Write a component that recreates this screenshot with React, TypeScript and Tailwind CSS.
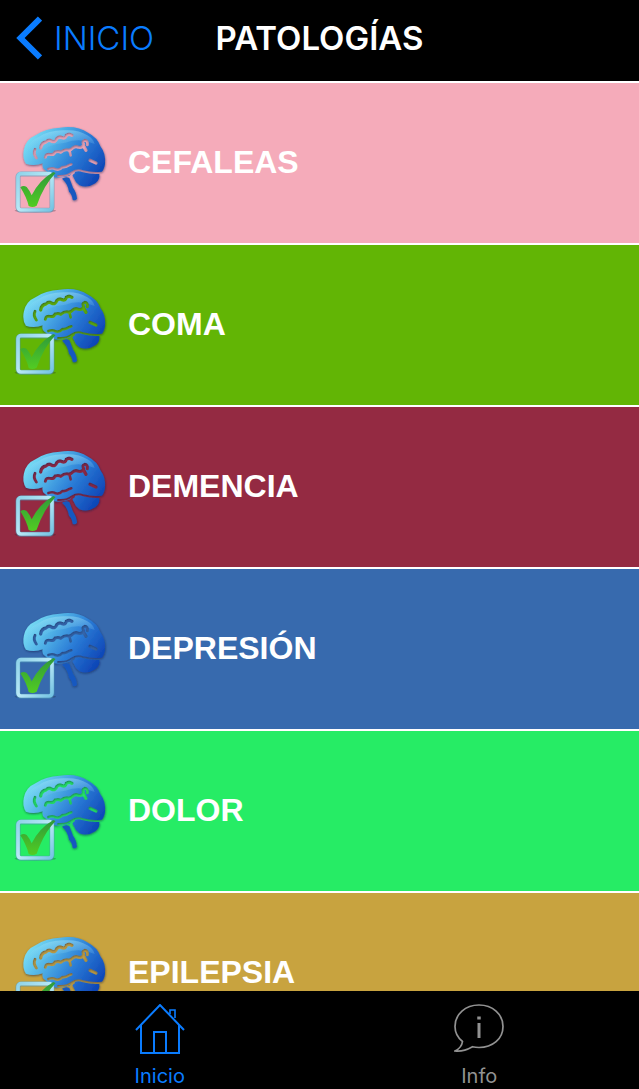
import React from 'react';

interface Pathology {
  name: string;
  color: string;
}

const pathologies: Pathology[] = [
  { name: 'CEFALEAS', color: 'bg-[#f5abba]' },
  { name: 'COMA', color: 'bg-[#62b505]' },
  { name: 'DEMENCIA', color: 'bg-[#942a42]' },
  { name: 'DEPRESIÓN', color: 'bg-[#376aae]' },
  { name: 'DOLOR', color: 'bg-[#26ec65]' },
  { name: 'EPILEPSIA', color: 'bg-[#c8a33f]' },
];

// Shared gradients and mask, rendered once for all the rows
const BrainDefs: React.FC = () => (
  <svg className="absolute h-0 w-0" aria-hidden="true">
    <defs>
      <linearGradient id="brain-fill" gradientUnits="userSpaceOnUse" x1="85" y1="75" x2="290" y2="215">
        <stop offset="0" stopColor="#79def5" />
        <stop offset="0.3" stopColor="#4fb0e6" />
        <stop offset="0.6" stopColor="#2a7bd6" />
        <stop offset="1" stopColor="#0c42b4" />
      </linearGradient>
      <linearGradient id="brain-shine" x1="0" y1="0" x2="0" y2="1">
        <stop offset="0" stopColor="#b5effc" stopOpacity="0.4" />
        <stop offset="1" stopColor="#5fbdf0" stopOpacity="0" />
      </linearGradient>
      <linearGradient id="box-stroke" x1="0" y1="0" x2="1" y2="1">
        <stop offset="0" stopColor="#8fd3ea" />
        <stop offset="0.5" stopColor="#b9e9f6" />
        <stop offset="1" stopColor="#74c3e3" />
      </linearGradient>
      <linearGradient id="check-fill" x1="0" y1="0" x2="0" y2="1">
        <stop offset="0" stopColor="#2f9a3a" />
        <stop offset="1" stopColor="#52cc22" />
      </linearGradient>
      <filter id="brain-shadow" x="-10%" y="-10%" width="120%" height="125%">
        <feDropShadow dx="1" dy="3" stdDeviation="3" floodColor="#0a2350" floodOpacity="0.6" />
      </filter>
      <mask id="brain-folds" maskUnits="userSpaceOnUse" x="36" y="-18" width="300" height="342">
        <rect x="36" y="-18" width="300" height="342" fill="#fff" />
        <g fill="none" stroke="#000" strokeWidth="8" strokeLinecap="round" strokeLinejoin="round">
          <path d="M105 112Q99 124 109 138" strokeWidth="9" />
          <path d="M122 108Q124 92 138 90Q146 81 156 88Q166 92 170 80Q178 72 186 77Q196 81 199 70Q207 63 216 70" strokeWidth="10" />
          <path d="M136 136Q138 124 150 127Q162 130 165 120Q176 116 182 121Q192 112 201 113Q211 117 218 108Q226 101 236 106Q248 108 251 97Q245 88 254 85Q264 86 262 98" strokeWidth="9" />
          <path d="M208 114L212 130" />
          <path d="M250 101L258 115" strokeWidth="10" />
          <path d="M145 171Q158 166 167 172Q179 176 187 165Q198 167 206 160L214 157" />
          <path d="M270 145L288 153" strokeWidth="10" />
          <path d="M174 192Q200 194 216 181Q232 170 250 178Q278 186 306 182" strokeWidth="6" />
          <path d="M222 182Q208 190 214 204" strokeWidth="6" />
        </g>
      </mask>
    </defs>
  </svg>
);

const BrainIcon: React.FC = () => (
  <svg viewBox="36 -18 300 342" className="h-[114px] w-[100px] shrink-0" aria-hidden="true">
    <g filter="url(#brain-shadow)">
      <g mask="url(#brain-folds)">
        <path
          d="M78 155Q66 138 72 112Q78 82 108 69Q136 49 180 47Q232 40 264 62Q292 76 302 104Q318 124 315 156Q312 178 298 186Q300 204 286 214Q262 230 238 220Q226 212 222 199L216 188Q190 199 164 196Q148 190 139 177Q124 168 128 154Q102 164 78 155Z"
          fill="url(#brain-fill)"
        />
        <path
          d="M80 120Q84 88 116 75Q146 55 190 55Q236 52 262 70Q280 80 284 96Q240 76 196 92Q140 96 118 126Q96 142 80 120Z"
          fill="url(#brain-shine)"
        />
      </g>
      <path
        d="M186 200Q197 192 208 198Q213 211 219 227Q229 240 231 260Q225 268 218 263Q216 247 207 239Q204 216 186 200Z"
        fill="#1659c0"
      />
    </g>
    <ellipse cx="106" cy="296" rx="62" ry="5" fill="#1b2030" opacity="0.28" />
    <rect x="54" y="186" width="102" height="109" rx="9" fill="none" stroke="#4b93b5" strokeWidth="15" opacity="0.6" />
    <rect x="54" y="185" width="102" height="109" rx="9" fill="none" stroke="url(#box-stroke)" strokeWidth="11" />
    <path
      d="M61 226Q70 219 80 225Q88 234 95 250Q116 206 160 180L167 183Q132 218 110 281Q98 288 86 282Q80 256 61 226Z"
      fill="url(#check-fill)"
    />
  </svg>
);

const HomeIcon: React.FC = () => (
  <svg viewBox="0 0 50 50" className="h-[50px] w-[50px]" fill="none" stroke="currentColor" strokeWidth="2" aria-hidden="true">
    <path d="M1 26L25 1L49 26" />
    <path d="M6 21V49H44V21" />
    <path d="M19 49V28H31V49" />
    <path d="M35 10V6H40V14" strokeWidth="1.6" />
  </svg>
);

const InfoIcon: React.FC = () => (
  <svg viewBox="0 0 50 50" className="h-[50px] w-[50px]" fill="none" stroke="currentColor" strokeWidth="1.7" aria-hidden="true">
    <path d="M8.500 37.500C3.500 33.500 1 28 1 22.500C1 10 11.500 1 25 1S49 10 49 22.500S38.500 43.500 25 43.500Q21.500 43.500 18.500 42.700C13.500 45.500 8 48 1 47C5 45 8 41.500 8.500 37.500Z" />
    <path d="M25 19V34" strokeWidth="3" />
    <path d="M25 12.500V15.500" strokeWidth="3.500" />
  </svg>
);

const App: React.FC = () => {
  return (
    <div className="flex h-screen flex-col bg-black font-['Inter',sans-serif]">
      <BrainDefs />

      <header className="grid shrink-0 grid-cols-[1fr_auto_1fr] items-center px-4 pt-3 pb-[17px]">
        <a href="#inicio" className="flex items-center gap-3 text-[33px] leading-[52px] font-light text-[#0a7cff]">
          <svg viewBox="0 0 26 44" className="h-[44px] w-[26px]" fill="none" stroke="currentColor" strokeWidth="6" aria-hidden="true">
            <path d="M24 2.500L4.500 22L24 41.500" />
          </svg>
          INICIO
        </a>
        <h1 className="text-[33px] leading-[52px] font-semibold text-white">PATOLOGÍAS</h1>
      </header>

      <main className="min-h-0 flex-1 overflow-y-auto [scrollbar-width:none]">
        <ul>
          {pathologies.map((item) => (
            <li key={item.name} className="border-t-2 border-white">
              <a href="#detalle" className={`flex h-40 items-center gap-4 pl-3 ${item.color}`}>
                <BrainIcon />
                <span className="pb-[2px] font-['Liberation_Sans',sans-serif] text-[32px] leading-10 font-bold text-white">
                  {item.name}
                </span>
              </a>
            </li>
          ))}
        </ul>
      </main>

      <nav className="grid shrink-0 grid-cols-2 pt-[13px] text-xl leading-6">
        <a href="#inicio" className="flex flex-col items-center gap-[10px] pb-px text-[#0a7cff]">
          <HomeIcon />
          Inicio
        </a>
        <a href="#info" className="flex flex-col items-center gap-[10px] pb-px text-[#929292]">
          <InfoIcon />
          Info
        </a>
      </nav>
    </div>
  );
};

export default App;
